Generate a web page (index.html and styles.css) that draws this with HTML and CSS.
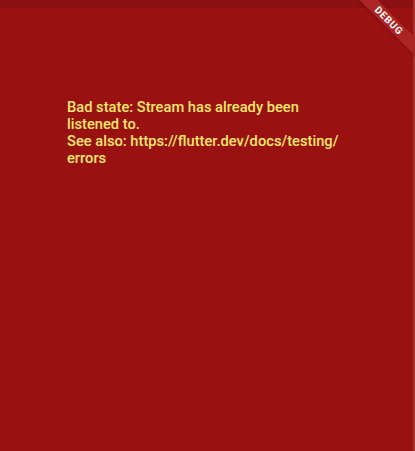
FILE: index.html
```html
<!DOCTYPE html>
<html>
<head>
<meta charset="utf-8">
<link rel="stylesheet" href="styles.css">
</head>
<body>
<div class="screen">
  <div class="statusbar"></div>
  <div class="content">
    <p class="error">Bad state: Stream has already been listened to.<br>See also: https://flutter.dev/docs/testing/<wbr>errors</p>
  </div>
  <div class="edge"></div>
  <div class="banner">DEBUG</div>
</div>
</body>
</html>
```
FILE: styles.css
```css
html, body {
  margin: 0;
  padding: 0;
  background: #9a1112;
  overflow: hidden;
}
.screen {
  position: relative;
  width: 415px;
  height: 451px;
  background: #9a1112;
  overflow: hidden;
  display: flex;
  flex-direction: column;
}
.statusbar {
  height: 8px;
  background: #8c0f11;
  flex: none;
}
.content {
  padding: 91px 0 0 67px;
}
.error {
  margin: 0;
  width: 280px;
  font-family: Roboto, "Liberation Sans", sans-serif;
  font-size: 14.7px;
  font-weight: 500;
  line-height: 17px;
  color: #f3e86c;
}
.edge {
  position: absolute;
  top: 0;
  right: 0;
  width: 2px;
  height: 451px;
  background: #a8302f;
}
.banner {
  position: absolute;
  left: 329px;
  top: 14px;
  width: 120px;
  height: 13px;
  background: #ab2525;
  color: #ffffff;
  font-family: Roboto, "Liberation Sans", sans-serif;
  font-weight: 700;
  font-size: 10px;
  line-height: 13px;
  text-align: center;
  letter-spacing: 0.7px;
  transform: rotate(45deg);
  box-shadow: 0 1px 2px rgba(0,0,0,0.2);
}
```
